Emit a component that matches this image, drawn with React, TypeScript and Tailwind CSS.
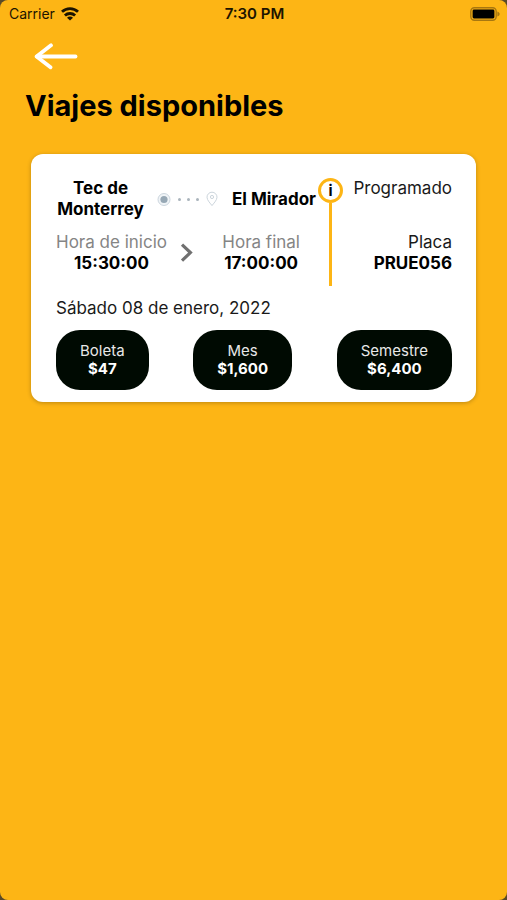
interface Price {
  label: string;
  amount: string;
}

interface Trip {
  origin: string;
  destination: string;
  startTime: string;
  endTime: string;
  status: string;
  plate: string;
  date: string;
  prices: Price[];
}

const trips: Trip[] = [
  {
    origin: "Tec de Monterrey",
    destination: "El Mirador",
    startTime: "15:30:00",
    endTime: "17:00:00",
    status: "Programado",
    plate: "PRUE056",
    date: "Sábado 08 de enero, 2022",
    prices: [
      { label: "Boleta", amount: "$47" },
      { label: "Mes", amount: "$1,600" },
      { label: "Semestre", amount: "$6,400" },
    ],
  },
];

const WifiIcon = () => (
  <svg width="18" height="14" viewBox="0 0 18 14" fill="none" stroke="#1c1400" strokeWidth="2.8">
    <path d="M1 4.8a11.6 11.6 0 0 1 16 0" />
    <path d="M3.9 8.6a7.3 7.3 0 0 1 10.2 0" />
    <path d="M9 13.6 6 10.8a4.2 4.2 0 0 1 6 0Z" fill="#1c1400" stroke="none" />
  </svg>
);

const BatteryIcon = () => (
  <svg width="30" height="14" viewBox="0 0 30 14" fill="none">
    <rect x="0.8" y="0.8" width="25.4" height="12.4" rx="3.6" stroke="#a87710" strokeWidth="1.4" />
    <rect x="2.6" y="2.6" width="21.8" height="8.8" rx="1.4" fill="#000" />
    <path d="M27.4 4.4c3 1.2 3 4 0 5.2Z" fill="#a87710" />
  </svg>
);

const BackArrow = () => (
  <svg
    width="44"
    height="28"
    viewBox="0 0 44 28"
    fill="none"
    stroke="#fff"
    strokeWidth="3.8"
    strokeLinecap="round"
    strokeLinejoin="round"
  >
    <path d="M41.5 14.5H3" />
    <path d="M17 3.3 2.6 14.5 16.5 25.3" />
  </svg>
);

// Origin dot, three steps and the destination pin
const RouteIcon = () => (
  <svg width="62" height="16" viewBox="0 0 62 16" fill="none" className="shrink-0">
    <circle cx="7" cy="8.5" r="6" fill="#f0f4f7" stroke="#ccd6de" />
    <circle cx="7" cy="8.5" r="3.6" fill="#97a8b5" />
    <circle cx="22.5" cy="8.5" r="1.5" fill="#aab4bc" />
    <circle cx="31.5" cy="8.5" r="1.5" fill="#aab4bc" />
    <circle cx="40.5" cy="8.5" r="1.5" fill="#aab4bc" />
    <path
      d="M55 14.6c-1.4-2-5-5.3-5-8.4a5 5 0 0 1 10 0c0 3.1-3.6 6.4-5 8.4Z"
      stroke="#ccd5dc"
    />
    <circle cx="55" cy="6" r="1.6" stroke="#ccd5dc" />
  </svg>
);

const Chevron = () => (
  <svg
    width="14"
    height="20"
    viewBox="0 0 14 20"
    fill="none"
    stroke="#707070"
    strokeWidth="3.2"
    className="mr-4"
  >
    <path d="m2 1.6 8.4 8L2 17.6" />
  </svg>
);

const StatusBar = () => (
  <div className="grid grid-cols-3 items-center h-7 pl-[9px] pr-[7px] text-sm text-[#1c1400]">
    <div className="flex items-center gap-[6px]">
      <span>Carrier</span>
      <WifiIcon />
    </div>
    <span className="text-center text-[15px] font-semibold">7:30 PM</span>
    <div className="flex justify-end">
      <BatteryIcon />
    </div>
  </div>
);

const TripCard = ({ trip }: { trip: Trip }) => (
  <article className="rounded-xl bg-white pl-[25px] pr-6 pt-6 pb-3 text-[17px] leading-[21px] text-[#1a1a1a] shadow-[0_1px_4px_rgba(0,0,0,0.25)]">
    <div className="flex">
      <div className="mr-[2px] w-[260px] shrink-0 text-black">
        <div className="flex items-center justify-between font-bold">
          <span className="w-[89px] text-center">{trip.origin}</span>
          <RouteIcon />
          <span className="whitespace-nowrap">{trip.destination}</span>
        </div>
        <div className="mt-3 flex items-center justify-between pr-4">
          <div className="text-center">
            <p className="text-[#858585]">Hora de inicio</p>
            <p className="font-bold">{trip.startTime}</p>
          </div>
          <Chevron />
          <div className="text-center">
            <p className="text-[#858585]">Hora final</p>
            <p className="font-bold">{trip.endTime}</p>
          </div>
        </div>
      </div>

      <div className="flex w-[25px] shrink-0 flex-col items-center">
        <button
          type="button"
          aria-label="Información del viaje"
          className="flex size-[25px] shrink-0 items-center justify-center rounded-full border-[3px] border-[#fdb515] text-[15px] font-bold text-black"
        >
          i
        </button>
        <div className="-mb-3 w-[3px] flex-1 bg-[#fdb515]" />
      </div>

      <div className="flex flex-1 flex-col justify-between text-right">
        <p>{trip.status}</p>
        <div>
          <p>Placa</p>
          <p className="font-bold text-black">{trip.plate}</p>
        </div>
      </div>
    </div>

    <p className="mt-6">{trip.date}</p>

    <div className="mt-[11px] flex justify-between">
      {trip.prices.map((price) => (
        <button
          key={price.label}
          type="button"
          className="rounded-3xl bg-[#000a02] px-6 py-3 text-[15px] leading-[18px] text-[#e8e8e8]"
        >
          <span className="block">{price.label}</span>
          <span className="block font-bold text-white">{price.amount}</span>
        </button>
      ))}
    </div>
  </article>
);

const App = () => {
  return (
    <div className="bg-[#5a4a28] font-['Inter',sans-serif]">
      <div className="min-h-screen rounded-lg bg-[#fdb515]">
        <StatusBar />
        <header className="px-[25px]">
          <button type="button" aria-label="Regresar" className="mt-[14px] ml-[9px] block">
            <BackArrow />
          </button>
          <h1 className="mt-[18px] text-[29px] leading-9 font-bold text-black">
            Viajes disponibles
          </h1>
        </header>
        <main className="mt-[30px] flex flex-col gap-4 px-[31px]">
          {trips.map((trip) => (
            <TripCard key={trip.plate} trip={trip} />
          ))}
        </main>
      </div>
    </div>
  );
};

export default App;
